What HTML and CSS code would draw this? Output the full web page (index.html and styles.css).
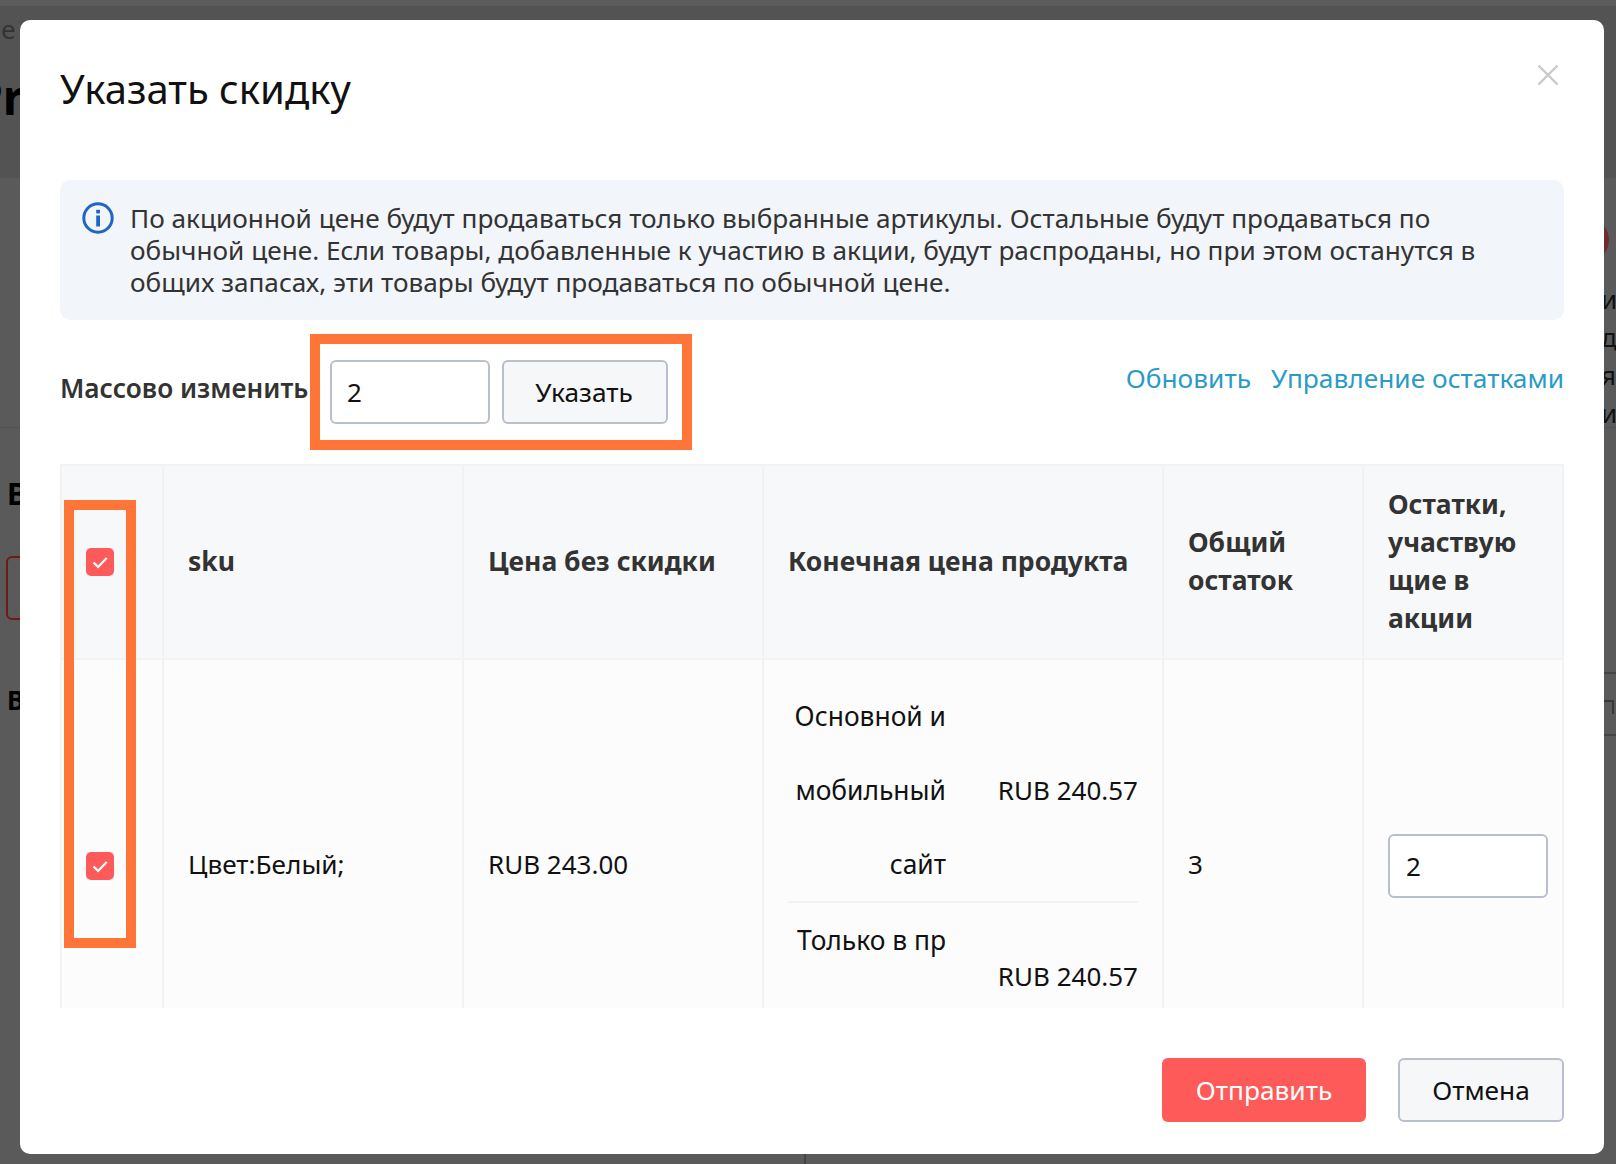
FILE: index.html
```html
<!DOCTYPE html>
<html lang="ru">
<head>
<meta charset="utf-8">
<title>Указать скидку</title>
<link rel="stylesheet" href="styles.css">
</head>
<body>
<div class="backdrop">
  <div class="bg-topstrip"></div>
  <div class="bg-band"></div>
  <span class="bg-e">e</span>
  <div class="bg-crumbs">
    <span class="c1">Акция «Т</span><span class="c2">»</span><span class="c3">HIT</span><span class="c4">Bl</span><span class="c5">Т</span><span class="c6">й</span><span class="c7">SMS П</span><span class="c8">20210808-20210807</span>
  </div>
  <span class="bg-r">Pr</span>
  <span class="bg-b1">В</span>
  <div class="bg-redbox"></div>
  <span class="bg-b2">В</span>
  <div class="bg-circle"></div>
  <div class="bg-right">ит<br>дл<br>я<br>и</div>
  <div class="bg-line bg-line-l"></div>
  <div class="bg-line bg-line-r"></div>
  <div class="bg-rowline bg-rowline-a"></div>
  <div class="bg-rowline bg-rowline-b"></div>
  <div class="bg-bracket"></div>
  <div class="bg-vline"></div>
</div>

<div class="modal" role="dialog">
  <header class="modal-head">
    <h1 class="modal-title">Указать скидку</h1>
    <svg class="close" viewBox="0 0 22 22" width="22" height="22" aria-label="close"><path d="M1.5 1.5l19 19M20.5 1.5l-19 19" fill="none" stroke="#c9c9c9" stroke-width="2.4"/></svg>
  </header>

  <div class="alert">
    <svg class="alert-icon" viewBox="0 0 32 32" width="32" height="32"><circle cx="16" cy="16" r="14.2" fill="none" stroke="#1f66c4" stroke-width="3"/><rect x="14.2" y="13.5" width="3.8" height="11" fill="#1f66c4"/><rect x="14.2" y="7.8" width="3.8" height="3.6" fill="#1f66c4"/></svg>
    <p class="alert-text">По акционной цене будут продаваться только выбранные артикулы. Остальные будут продаваться по обычной цене. Если товары, добавленные к участию в акции, будут распроданы, но при этом останутся в общих запасах, эти товары будут продаваться по обычной цене.</p>
  </div>

  <div class="toolbar">
    <label class="bulk-label">Массово изменить</label>
    <input class="field field-bulk" type="text" value="2">
    <button class="btn btn-set" type="button">Указать</button>
    <div class="links">
      <a class="link">Обновить</a>
      <a class="link">Управление остатками</a>
    </div>
  </div>

  <div class="table-wrap">
    <table class="sku-table">
      <colgroup>
        <col class="col-check"><col class="col-sku"><col class="col-price"><col class="col-final"><col class="col-total"><col class="col-stock">
      </colgroup>
      <thead>
        <tr>
          <th class="cell-check"><span class="check"><svg viewBox="0 0 28 28" width="28" height="28"><path d="M7.5 14.5l4.6 4.4 8.6-9" fill="none" stroke="#fff" stroke-width="2.2"/></svg></span></th>
          <th>sku</th>
          <th>Цена без скидки</th>
          <th>Конечная цена продукта</th>
          <th>Общий остаток</th>
          <th>Остатки, участвую<br>щие в акции</th>
        </tr>
      </thead>
      <tbody>
        <tr>
          <td class="cell-check"><span class="check check-row"><svg viewBox="0 0 28 28" width="28" height="28"><path d="M7.5 14.5l4.6 4.4 8.6-9" fill="none" stroke="#fff" stroke-width="2.2"/></svg></span></td>
          <td>Цвет:Белый;</td>
          <td class="num">RUB 243.00</td>
          <td class="cell-final">
            <div class="final-row">
              <div class="final-label">Основной и<br>мобильный<br>сайт</div>
              <div class="final-value">RUB 240.57</div>
            </div>
            <div class="final-row">
              <div class="final-label">Только в пр<br>иложении</div>
              <div class="final-value">RUB 240.57</div>
            </div>
          </td>
          <td class="num">3</td>
          <td><input class="field field-stock" type="text" value="2"></td>
        </tr>
      </tbody>
    </table>
  </div>

  <footer class="modal-foot">
    <button class="btn btn-primary" type="button">Отправить</button>
    <button class="btn btn-cancel" type="button">Отмена</button>
  </footer>

  <div class="mark mark-bulk"></div>
  <div class="mark mark-checks"></div>
</div>
</body>
</html>
```
FILE: styles.css
```css
* { box-sizing: border-box; }
html, body { margin: 0; height: 100%; }
body {
  width: 1616px;
  height: 1164px;
  overflow: hidden;
  position: relative;
  background: #595959;
  font-family: "Noto Sans", "Open Sans", sans-serif;
  color: #111;
}

/* Dimmed page behind the dialog */
.backdrop { position: absolute; inset: 0; overflow: hidden; background: #5a5a5a; color: #000; }
.bg-topstrip { position: absolute; left: 0; top: 0; width: 100%; height: 6px; background: #5c5c5c; }
.bg-band { position: absolute; left: 0; top: 6px; width: 100%; height: 172px; background: #535353; }
.bg-e { position: absolute; left: 1px; top: 12px; font-size: 26px; line-height: 34px; color: #333; }
.bg-crumbs { position: absolute; left: 0; top: 12px; width: 100%; height: 34px; font-size: 26px; line-height: 34px; color: #2a2a2a; }
.bg-crumbs span { position: absolute; top: 0; white-space: nowrap; }
.c1 { left: 300px; }
.c2 { left: 420px; }
.c3 { left: 628px; }
.c4 { left: 745px; }
.c5 { left: 838px; }
.c6 { left: 885px; }
.c7 { left: 925px; }
.c8 { left: 1140px; }
.bg-r { position: absolute; left: -27px; top: 64px; font-size: 48px; line-height: 66px; font-weight: 700; color: #000; }
.bg-b1 { position: absolute; left: 7px; top: 474px; font-size: 30px; line-height: 40px; font-weight: 700; }
.bg-b2 { position: absolute; left: 7px; top: 682px; font-size: 26px; line-height: 36px; font-weight: 700; }
.bg-redbox { position: absolute; left: 6px; top: 556px; width: 60px; height: 64px; border: 2px solid #6c1c14; border-radius: 6px; }
.bg-circle { position: absolute; left: 1565px; top: 218px; width: 44px; height: 44px; border-radius: 50%; background: #6e2c2c; }
.bg-right { position: absolute; left: 1601px; top: 280px; font-size: 26px; line-height: 38px; color: #111; }
.bg-line { position: absolute; top: 427px; height: 1px; background: #525252; }
.bg-line-l { left: 0; width: 20px; }
.bg-line-r { left: 1604px; width: 12px; }
.bg-rowline { position: absolute; left: 1604px; width: 12px; height: 2px; background: #444; }
.bg-rowline-a { top: 672px; }
.bg-rowline-b { top: 734px; }
.bg-bracket { position: absolute; left: 1600px; top: 700px; width: 14px; height: 14px; border: 2px solid #383838; border-bottom: 0; }
.bg-vline { position: absolute; left: 804px; top: 1150px; width: 2px; height: 14px; background: #444; }

/* Dialog */
.modal {
  position: absolute;
  left: 20px;
  top: 20px;
  width: 1584px;
  height: 1134px;
  padding: 0 40px;
  background: #fff;
  border-radius: 10px;
  display: flex;
  flex-direction: column;
}
.modal-head { height: 160px; flex: none; position: relative; padding-top: 40px; }
.modal-title { margin: 0; font-size: 40px; line-height: 58px; font-weight: 400; color: #111; }
.close { position: absolute; right: 5px; top: 44px; }

.alert {
  flex: none;
  height: 140px;
  background: #f2f5fa;
  border-radius: 10px;
  padding: 22px 24px 0 22px;
  display: flex;
  gap: 16px;
}
.alert-icon { flex: none; }
.alert-text { margin: 0; font-size: 26.2px; line-height: 32px; color: #333; }

.toolbar { flex: none; height: 144px; padding-top: 40px; display: flex; align-items: flex-start; }
.bulk-label { font-size: 26.2px; line-height: 56px; font-weight: 600; color: #333; white-space: nowrap; width: 270px; flex: none; }
.field {
  display: block;
  height: 64px;
  border: 2px solid #b9bfcc;
  border-radius: 6px;
  background: #fff;
  font: 400 26px/60px "Noto Sans", sans-serif;
  color: #111;
  padding: 0 15px;
  outline: none;
}
.field-bulk { width: 160px; }
.btn {
  height: 64px;
  border-radius: 6px;
  font: 400 26.3px/60px "Noto Sans", sans-serif;
  padding: 0;
}
.btn-set { width: 166px; margin-left: 12px; padding-right: 2px; background: #f6f7f9; border: 2px solid #b9bfcc; color: #111; }
.links { margin-left: auto; margin-top: -1px; display: flex; gap: 20px; }
.link { font-size: 26.3px; line-height: 38px; color: #2b9bc5; white-space: nowrap; }

.table-wrap { flex: none; height: 544px; overflow: hidden; }
.sku-table { width: 1504px; table-layout: fixed; border-collapse: collapse; font-size: 26.2px; line-height: 38px; color: #111; }
.col-check { width: 102px; }
.col-sku, .col-price { width: 300px; }
.col-final { width: 400px; }
.col-total { width: 200px; }
.col-stock { width: 200px; }
.sku-table th, .sku-table td { border: 2px solid #f1f2f4; padding: 19px 24px; vertical-align: middle; text-align: left; }
.sku-table th { padding-top: 19px; padding-bottom: 21px; background: #f7f8fa; font-weight: 700; font-size: 26.5px; color: #333; }
.sku-table td { background: #fcfcfc; }
.sku-table td.num { font-size: 26px; }
.sku-table .cell-check { padding: 0 0 0 24px; }
.check { display: block; width: 28px; height: 28px; border-radius: 5px; background: #ff5a5a; }
.check svg { display: block; }
.check-row { margin-top: 4px; }

.sku-table .cell-final { padding-top: 19px; padding-bottom: 17px; }
.final-row { display: flex; justify-content: space-between; align-items: center; line-height: 74px; }
.final-row + .final-row { border-top: 2px solid #f1f2f4; }
.final-row + .final-row .final-value { margin-top: -2px; }
.final-label { width: 158px; font-size: 26.4px; text-align: right; white-space: nowrap; line-height: 74px; }
.final-value { line-height: 38px; font-size: 26px; text-align: right; white-space: nowrap; }
.field-stock { width: 160px; margin-top: 4px; padding-left: 16px; }

.modal-foot { flex: none; padding-top: 50px; display: flex; justify-content: flex-end; gap: 32px; }
.btn-primary { width: 204px; background: #ff5a5a; border: 0; color: #fff; }
.btn-cancel { width: 166px; background: #f6f7f9; border: 2px solid #b9bfcc; color: #111; }

/* Orange annotation frames on top of the dialog */
.mark { position: absolute; border: 10px solid #ff7538; pointer-events: none; }
.mark-bulk { left: 290px; top: 314px; width: 382px; height: 116px; }
.mark-checks { left: 44px; top: 480px; width: 72px; height: 448px; }
```
